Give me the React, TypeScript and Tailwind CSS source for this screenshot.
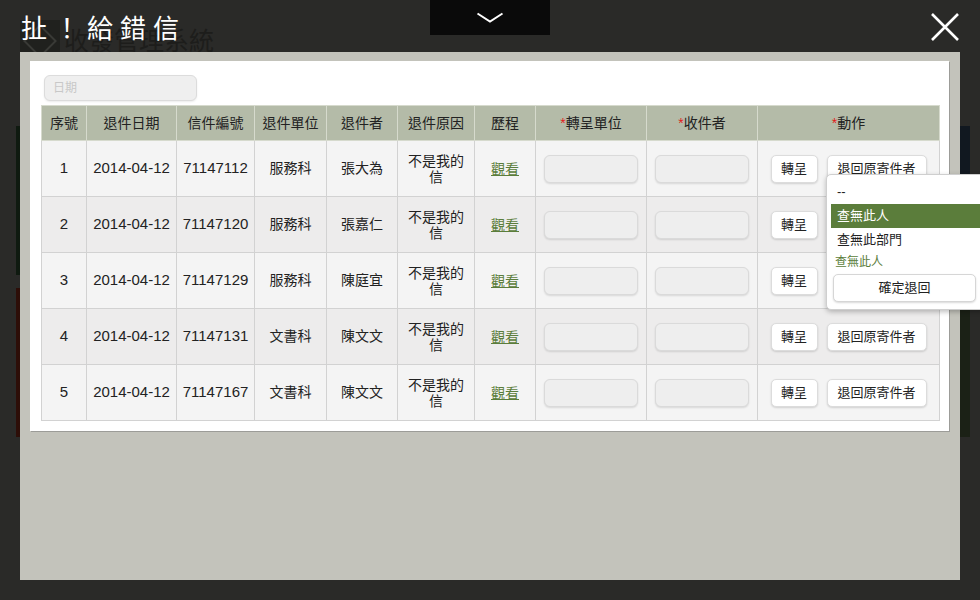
import React from 'react';

type Row = { no: number; date: string; id: string; unit: string; name: string; bg: string };

const rows: Row[] = [
  { no: 1, date: '2014-04-12', id: '71147112', unit: '服務科', name: '張大為', bg: 'bg-[#f4f4f4]' },
  { no: 2, date: '2014-04-12', id: '71147120', unit: '服務科', name: '張嘉仁', bg: 'bg-[#edecec]' },
  { no: 3, date: '2014-04-12', id: '71147129', unit: '服務科', name: '陳庭宜', bg: 'bg-[#f4f4f4]' },
  { no: 4, date: '2014-04-12', id: '71147131', unit: '文書科', name: '陳文文', bg: 'bg-[#edecec]' },
  { no: 5, date: '2014-04-12', id: '71147167', unit: '文書科', name: '陳文文', bg: 'bg-[#f4f4f4]' },
];

const headers = [
  { label: '序號', w: 'w-[45px]', req: false },
  { label: '退件日期', w: 'w-[90px]', req: false },
  { label: '信件編號', w: 'w-[78px]', req: false },
  { label: '退件單位', w: 'w-[72px]', req: false },
  { label: '退件者', w: 'w-[71px]', req: false },
  { label: '退件原因', w: 'w-[77px]', req: false },
  { label: '歷程', w: 'w-[61px]', req: false },
  { label: '轉呈單位', w: 'w-[111px]', req: true },
  { label: '收件者', w: 'w-[111px]', req: true },
  { label: '動作', w: 'w-[182px]', req: true },
];

const td = 'border border-[#d2d2d2] h-[56px] text-center align-middle';
const fieldBox =
  'mx-auto w-[94px] h-[28px] rounded-[6px] border border-[#dadada] bg-[#eeeeee] shadow-[0_1px_2px_rgba(0,0,0,0.12)]';
const btn =
  'h-[28px] rounded-[5px] border border-[#dcdcdc] bg-white text-[13px] text-[#222] shadow-[0_1px_2px_rgba(0,0,0,0.15)]';

const Backdrop = () => (
  <>
    {/* page behind the dialog */}
    <div className="absolute left-[20px] top-[20px] w-[40px] h-[42px] bg-[#20211e] flex items-center justify-center">
      <div className="w-[24px] h-[24px] rotate-45 border-2 border-[#393a36]" />
    </div>
    <div className="absolute left-[64px] top-[24px] text-[25px] leading-[30px] text-[#1d1d1b] [font-family:'Noto_Sans_CJK_TC',sans-serif]">
      收發管理系統
    </div>
    <div className="absolute left-[16px] top-[126px] w-[6px] h-[149px] bg-[#0f1a10]" />
    <div className="absolute left-[16px] top-[288px] w-[6px] h-[149px] bg-[#2d0e08]" />
    <div className="absolute left-[958px] top-[126px] w-[12px] h-[149px] bg-[#111820]" />
    <div className="absolute left-[958px] top-[288px] w-[12px] h-[149px] bg-[#1b2116]" />
  </>
);

export default function App() {
  return (
    <div className="relative w-[980px] h-[600px] overflow-hidden bg-[#2a2a28] [font-family:'Liberation_Sans','Noto_Sans_CJK_TC',sans-serif]">
      <Backdrop />

      <div className="relative h-[52px]">
        <h1 className="pl-[21px] pt-[11px] text-[26px] leading-[32px] tracking-[7px] text-white [font-family:'Noto_Sans_CJK_TC',sans-serif]">
          扯！給錯信
        </h1>
        <button className="absolute left-[430px] top-0 w-[120px] h-[35px] bg-[#0a0a0a] flex items-center justify-center">
          <svg width="28" height="12" viewBox="0 0 28 12">
            <path d="M1.5 1.5 L14 9.5 L26.5 1.5" fill="none" stroke="#fff" strokeWidth="2" />
          </svg>
        </button>
        <button className="absolute left-[930px] top-[12px]">
          <svg width="30" height="30" viewBox="0 0 30 30">
            <path d="M2 2 L28 28 M28 2 L2 28" stroke="#fff" strokeWidth="2.6" />
          </svg>
        </button>
      </div>

      <div className="relative mx-[20px] h-[528px] bg-[#c3c3bb] pt-[9px] pl-[10px]">
        <div className="w-[919px] h-[370px] bg-white shadow-[1px_1px_0_#9c9c98] px-[11px] pt-[14px]">
          <div className="ml-[3px] w-[153px] h-[26px] rounded-[6px] border border-[#dcdcdc] bg-[#efefef] pl-[8px] flex items-center text-[12px] text-[#c8c8c8] shadow-[0_1px_2px_rgba(0,0,0,0.08)]">
            日期
          </div>

          <table className="mt-[4px] w-[898px] table-fixed border-collapse">
            <thead>
              <tr>
                {headers.map((h) => (
                  <th
                    key={h.label}
                    className={`${h.w} h-[35px] bg-[#b4bba8] border border-[#d6dacd] text-center font-normal text-[14px] text-[#222]`}
                  >
                    {h.req && <span className="text-[#e21b1b]">*</span>}
                    {h.label}
                  </th>
                ))}
              </tr>
            </thead>
            <tbody>
              {rows.map((r) => (
                <tr key={r.no} className={r.bg}>
                  <td className={`${td} text-[15px] text-[#222]`}>{r.no}</td>
                  <td className={`${td} text-[15px] text-[#222]`}>{r.date}</td>
                  <td className={`${td} text-[15px] text-[#222]`}>{r.id}</td>
                  <td className={`${td} text-[14px] text-[#222]`}>{r.unit}</td>
                  <td className={`${td} text-[14px] text-[#222]`}>{r.name}</td>
                  <td className={`${td} px-[5px] text-[14px] leading-[16px] text-[#222]`}>不是我的信</td>
                  <td className={td}>
                    <span className="text-[14px] text-[#5b7d3b] underline">觀看</span>
                  </td>
                  <td className={td}>
                    <div className={fieldBox} />
                  </td>
                  <td className={td}>
                    <div className={fieldBox} />
                  </td>
                  <td className={td}>
                    <div className="flex justify-center gap-[9px]">
                      <button className={`${btn} w-[47px]`}>轉呈</button>
                      <button className={`${btn} w-[100px]`}>退回原寄件者</button>
                    </div>
                  </td>
                </tr>
              ))}
            </tbody>
          </table>
        </div>
      </div>

      {/* open return-reason menu */}
      <div className="absolute left-[826px] top-[174px] w-[162px] h-[136px] rounded-[5px] border border-[#cfcfcf] bg-white shadow-[0_2px_5px_rgba(0,0,0,0.25)] pl-[4px] pt-[5px] text-[13px] text-[#222]">
        <div className="h-[24px] pl-[6px] leading-[24px]">--</div>
        <div className="h-[24px] pl-[6px] leading-[24px] bg-[#5b7d3b] text-white">查無此人</div>
        <div className="h-[24px] pl-[6px] leading-[24px]">查無此部門</div>
        <div className="pl-[4px] pt-[2px] text-[12px] leading-[16px] text-[#5b7d3b]">查無此人</div>
        <button className="mt-[4px] ml-[2px] w-[143px] h-[28px] rounded-[5px] border border-[#d6d6d6] bg-white text-[13px] shadow-[0_1px_2px_rgba(0,0,0,0.15)]">
          確定退回
        </button>
      </div>
    </div>
  );
}
